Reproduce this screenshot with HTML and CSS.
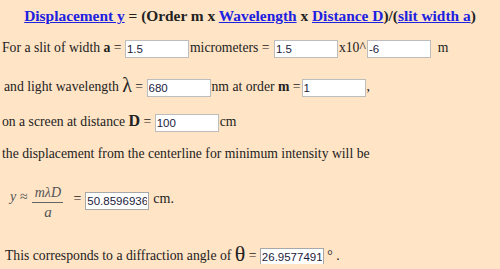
FILE: index.html
```html
<!DOCTYPE html>
<html lang="en">
<head>
  <meta charset="UTF-8">
  <title>Single Slit Diffraction</title>
  <link rel="stylesheet" href="styles.css">
</head>
<body>

<div class="title">
  <a href="#">Displacement y</a> = (Order m x <a href="#">Wavelength</a> x <a href="#">Distance D</a>)/(<a href="#">slit width a</a>)
</div>

<div class="row row-slit">
  For a slit of width <b>a</b> = <input class="num" type="text" value="1.5"><span class="tight">micrometers = </span><input class="num" type="text" value="1.5"><span class="tight">x10^</span><input class="num" type="text" value="-6"> &nbsp;m
</div>

<div class="row row-wave">
  and light wavelength <span class="sym">&lambda;</span> = <input class="num" type="text" value="680"><span class="tight">nm at order <b>m</b> =</span><input class="num" type="text" value="1"><span class="tight">,</span>
</div>

<div class="row row-dist">
  on a screen at distance <b class="big">D</b> = <input class="num" type="text" value="100"><span class="tight">cm</span>
</div>

<div class="row row-text">
  the displacement from the centerline for minimum intensity will be
</div>

<div class="formula">
  <span class="lhs">y &asymp;</span>
  <span class="frac">
    <span class="top">m&lambda;D</span>
    <span class="bar"></span>
    <span class="bottom">a</span>
  </span>
  <span class="eq">=</span>
  <input class="num result" type="text" value="50.8596936">
  <span class="unit">cm.</span>
</div>

<div class="row row-angle">
  This corresponds to a diffraction angle of <span class="sym theta">&theta;</span> = <input class="num result" type="text" value="26.9577491"> &deg; .
</div>

</body>
</html>
```

FILE: styles.css
```css
body {
  margin: 0;
  padding: 0 2px;
  background-color: #ffe4c6;
  color: #222;
  font-family: "Liberation Serif", "Times New Roman", serif;
  font-size: 13.7px;
}

a {
  color: #2020e0;
}

.title {
  margin-top: 6px;
  height: 20px;
  line-height: 20px;
  text-align: center;
  font-weight: bold;
  font-size: 15.4px;
}

.row {
  height: 20px;
  line-height: 20px;
  white-space: nowrap;
}

.row-slit { margin-top: 12px; }
.row-wave { margin-top: 17px; padding-left: 2px; }
.row-dist { margin-top: 16px; }
.row-text { margin-top: 13px; }
.row-angle { margin-top: 24px; padding-left: 3px; }

.tight {
  margin: 0 1px;
}

.sym {
  font-size: 20px;
  vertical-align: -1px;
}

.theta {
  font-size: 22px;
}

.big {
  font-size: 16px;
}

.num {
  box-sizing: border-box;
  width: 64px;
  height: 18px;
  padding: 0 1px;
  border: 1px solid #bdbdbd;
  background: #fff;
  color: #1c1c3c;
  font-family: "Liberation Sans", Arial, sans-serif;
  font-size: 11.5px;
  vertical-align: middle;
}

.result {
  border-color: #a8a8a8;
}

.formula {
  margin-top: 12px;
  height: 44px;
  display: flex;
  align-items: flex-start;
  padding-left: 8px;
  font-size: 14px;
  line-height: 14px;
}

.lhs {
  margin-top: 14px;
  font-style: italic;
  color: #555;
}

.frac {
  display: inline-flex;
  flex-direction: column;
  align-items: center;
  margin: 10px 0 0 5px;
  font-style: italic;
  color: #555;
}

.frac .top {
  line-height: 14px;
}

.frac .bar {
  width: 31px;
  border-top: 1px solid #666;
  margin: 2px 0 2px;
}

.frac .bottom {
  line-height: 14px;
  font-size: 15px;
}

.eq {
  margin: 16px 4px 0 10px;
}

.formula .num {
  margin-top: 16px;
}

.unit {
  margin: 16px 0 0 4px;
}
```
